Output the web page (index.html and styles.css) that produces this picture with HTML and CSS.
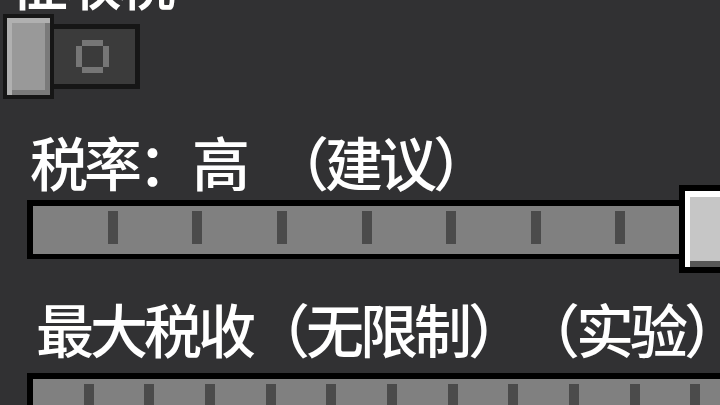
FILE: index.html
```html
<!DOCTYPE html>
<html lang="zh-CN">
<head>
<meta charset="utf-8">
<title>设置</title>
<link rel="stylesheet" href="styles.css">
</head>
<body>
<div class="screen">
  <div class="label label-top">征收税</div>

  <div class="toggle">
    <div class="toggle-knob"></div>
    <div class="toggle-track">
      <svg class="toggle-ring" width="33" height="33" viewBox="0 0 33 33">
        <rect x="6" y="0" width="21" height="6" fill="#767676"/>
        <rect x="6" y="27" width="21" height="6" fill="#767676"/>
        <rect x="0" y="6" width="6" height="21" fill="#767676"/>
        <rect x="27" y="6" width="6" height="21" fill="#767676"/>
      </svg>
    </div>
  </div>

  <div class="label label-one">税率：高&#8194;（建议）</div>

  <div class="slider">
    <div class="track track-one">
      <span class="tick"></span><span class="tick"></span><span class="tick"></span>
      <span class="tick"></span><span class="tick"></span><span class="tick"></span>
      <span class="tick"></span>
    </div>
    <div class="knob"></div>
  </div>

  <div class="label label-two">最大税收（无限制）（实验）</div>

  <div class="slider slider-two">
    <div class="track track-two">
      <span class="tick"></span><span class="tick"></span><span class="tick"></span>
      <span class="tick"></span><span class="tick"></span><span class="tick"></span>
      <span class="tick"></span><span class="tick"></span><span class="tick"></span>
      <span class="tick"></span><span class="tick"></span><span class="tick"></span>
      <span class="tick"></span><span class="tick"></span>
    </div>
  </div>
</div>
</body>
</html>
```

FILE: styles.css
```css
html, body {
  margin: 0;
  padding: 0;
  width: 720px;
  height: 405px;
  overflow: hidden;
  background: #313133;
}

.screen {
  display: flex;
  flex-direction: column;
  width: 720px;
  height: 405px;
  overflow: hidden;
}

.label {
  font-family: "Noto Sans CJK SC", "Noto Sans", sans-serif;
  font-size: 58px;
  font-weight: 500;
  line-height: 58px;
  height: 58px;
  letter-spacing: -4px;
  color: #ffffff;
  white-space: nowrap;
  text-spacing-trim: space-all;
  font-feature-settings: "halt" 0, "palt" 0;
  flex: none;
}

.label-top {
  margin-top: -49px;
  padding-left: 10px;
}

.label-one {
  margin-top: 33px;
  padding-left: 30px;
}

.label-two {
  margin-top: 26px;
  padding-left: 36px;
}

/* toggle */
.toggle {
  display: flex;
  align-items: center;
  margin-top: 5px;
  margin-left: 3px;
  height: 85px;
  flex: none;
}

.toggle-knob {
  width: 43px;
  height: 77px;
  border: 4px solid #161616;
  background: #999999;
  box-shadow: inset 5px 5px 0 #b0b0b0, inset -5px -5px 0 #7a7a7a;
  flex: none;
  position: relative;
  z-index: 1;
}

.toggle-track {
  width: 59px;
  height: 55px;
  border: 5px solid #161616;
  border-left: 0;
  background: #3b3b3b;
  display: flex;
  align-items: center;
  padding-left: 22px;
  box-sizing: content-box;
  flex: none;
}

.toggle-ring {
  display: block;
}

/* sliders */
.slider {
  display: flex;
  align-items: center;
  height: 88px;
  margin-top: -5px;
  margin-left: 27px;
  flex: none;
}

.slider-two {
  margin-top: 1px;
}

.track {
  height: 43px;
  border: 6px solid #000000;
  border-bottom-width: 5px;
  background: #808080;
  display: flex;
  justify-content: space-evenly;
  align-items: flex-start;
  padding-top: 5px;
  box-sizing: content-box;
  flex: none;
}

.track-one {
  width: 667px;
}

.track-two {
  width: 900px;
}

.tick {
  width: 10px;
  height: 33px;
  background: #4b4b4b;
  flex: none;
}

.knob {
  width: 50px;
  height: 76px;
  border: 6px solid #000000;
  background: #c6c6c6;
  box-shadow: inset 5px 6px 0 #ffffff, inset 0 -6px 0 #585858;
  flex: none;
  margin-left: -27px;
  position: relative;
  z-index: 1;
}
```
